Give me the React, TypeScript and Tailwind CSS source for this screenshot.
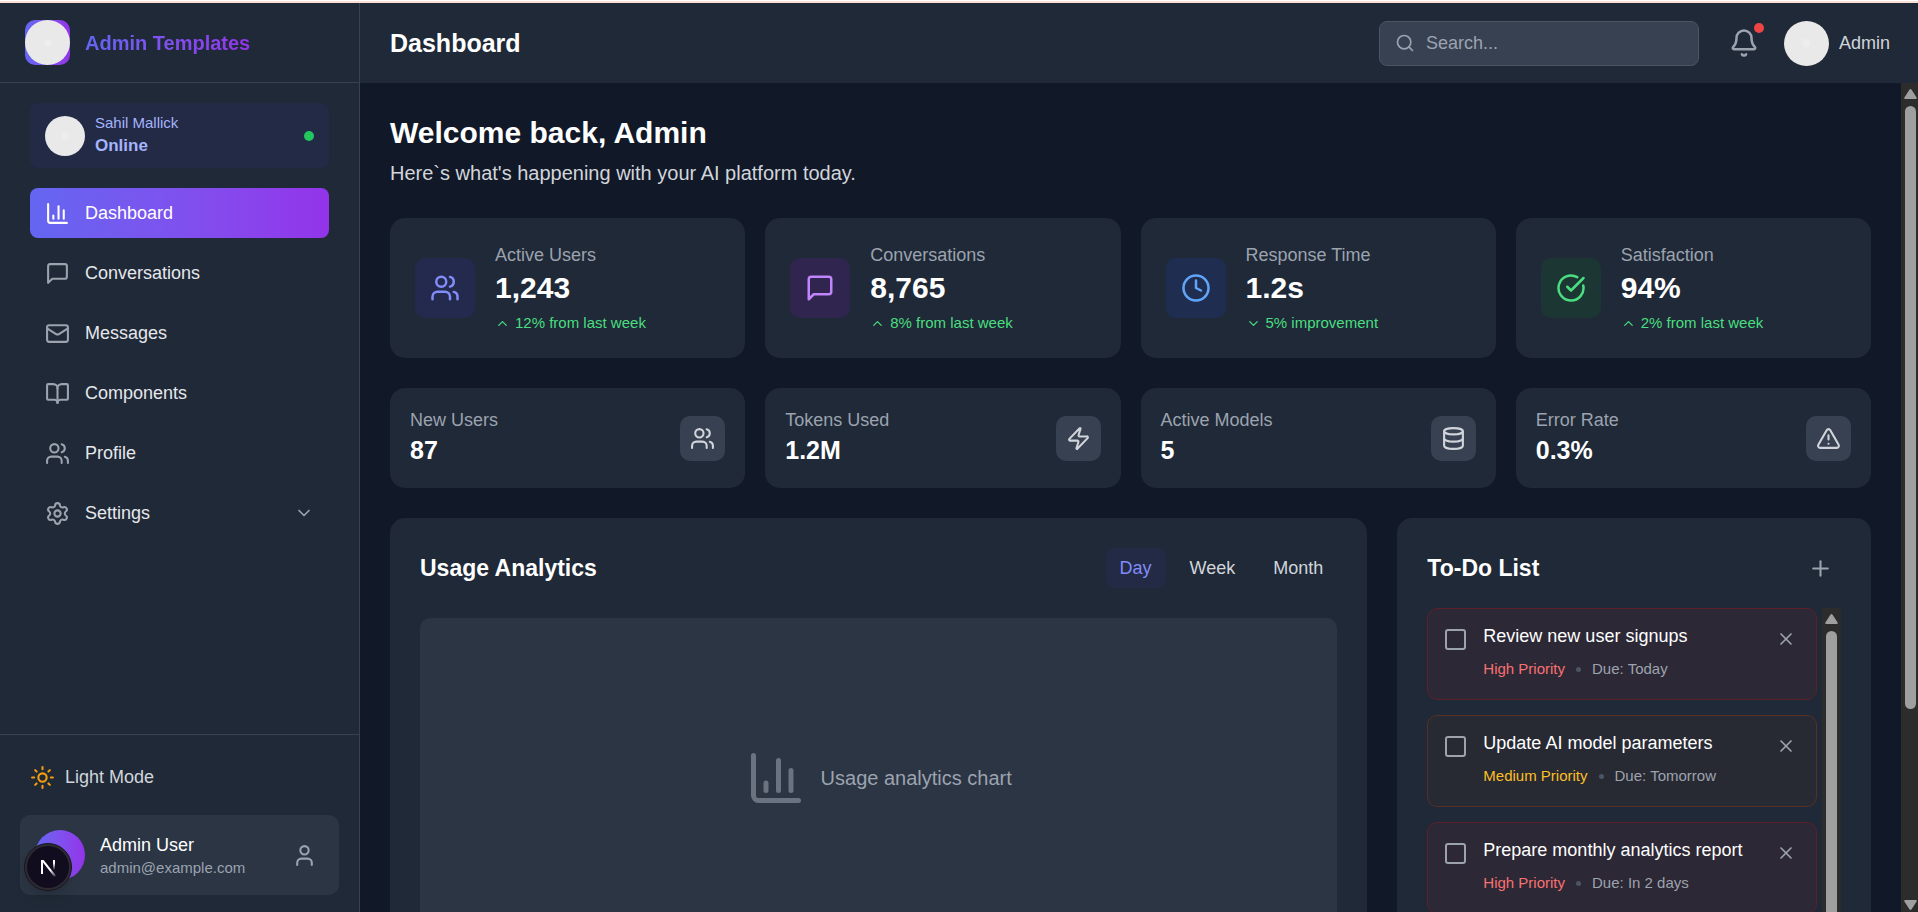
import type { ComponentType, ReactNode } from 'react';
import {
  Bell,
  BookOpen,
  ChartColumn,
  ChevronDown,
  ChevronUp,
  CircleCheckBig,
  Clock,
  Database,
  Mail,
  Plus,
  Search,
  Settings,
  Sun,
  TriangleAlert,
  User,
  Users,
  X,
  Zap,
} from 'lucide-react';

type Icon = ComponentType<{ className?: string }>;

function MessageSquare({ className }: { className?: string }) {
  return (
    <svg
      viewBox="0 0 24 24"
      fill="none"
      stroke="currentColor"
      strokeWidth="2"
      strokeLinecap="round"
      strokeLinejoin="round"
      className={className}
      aria-hidden="true"
    >
      <path d="M21 15a2 2 0 0 1-2 2H7l-4 4V5a2 2 0 0 1 2-2h14a2 2 0 0 1 2 2z" />
    </svg>
  );
}

function Avatar({ className }: { className: string }) {
  return (
    <span className={`flex shrink-0 items-center justify-center rounded-full bg-[#e9e9e9] ${className}`}>
      <span className="size-2 rounded-full bg-[#ededed]" />
    </span>
  );
}

function ScrollBar({ className, thumb, down }: { className: string; thumb: string; down?: boolean }) {
  return (
    <div aria-hidden="true" className={`flex shrink-0 flex-col items-center bg-[#2c2c2c] pt-[6px] ${className}`}>
      <svg viewBox="0 0 13 10" className="h-[10px] w-[13px] shrink-0 fill-[#9f9f9f]">
        <path d="M5.4.8a1.4 1.4 0 0 1 2.2 0l5 7.6a1 1 0 0 1-.9 1.6H1.3a1 1 0 0 1-.9-1.6z" />
      </svg>
      <div className={`mt-[7px] w-[11px] shrink-0 rounded-full bg-[#9f9f9f] ${thumb}`} />
      {down && (
        <svg viewBox="0 0 13 10" className="mt-auto mb-[5px] h-[10px] w-[13px] shrink-0 rotate-180 fill-[#9f9f9f]">
          <path d="M5.4.8a1.4 1.4 0 0 1 2.2 0l5 7.6a1 1 0 0 1-.9 1.6H1.3a1 1 0 0 1-.9-1.6z" />
        </svg>
      )}
    </div>
  );
}

const navItems: { label: string; icon: Icon; active?: boolean; expandable?: boolean }[] = [
  { label: 'Dashboard', icon: ChartColumn, active: true },
  { label: 'Conversations', icon: MessageSquare },
  { label: 'Messages', icon: Mail },
  { label: 'Components', icon: BookOpen },
  { label: 'Profile', icon: Users },
  { label: 'Settings', icon: Settings, expandable: true },
];

function Sidebar() {
  return (
    <aside className="relative flex w-[360px] shrink-0 flex-col border-r border-[#374151] bg-[#1f2937]">
      <div className="flex h-20 shrink-0 items-center gap-[15px] border-b border-[#374151] px-[25px]">
        <span className="rounded-[10px] bg-linear-to-r from-[#6366f1] to-[#9333ea]">
          <Avatar className="size-[45px]" />
        </span>
        <span className="bg-linear-to-r from-[#6366f1] to-[#9333ea] bg-clip-text text-[20px] leading-[30px] font-bold text-transparent">
          Admin Templates
        </span>
      </div>

      <div className="flex flex-1 flex-col gap-5 px-[30px] pt-5">
        <div className="flex items-center gap-[10px] rounded-lg bg-[#232a46] px-[15px] py-[10px] text-[#a5b4fc]">
          <Avatar className="size-10" />
          <div className="flex-1">
            <p className="text-[15px] leading-5">Sahil Mallick</p>
            <p className="text-[17px] leading-[25px] font-bold">Online</p>
          </div>
          <span className="size-[10px] rounded-full bg-[#22c55e]" />
        </div>

        <nav className="flex flex-col gap-[10px]">
          {navItems.map(({ label, icon: ItemIcon, active, expandable }) => (
            <a
              key={label}
              href="#"
              className={`flex h-[50px] items-center gap-[15px] rounded-lg px-[15px] text-[18px] leading-[25px] font-medium ${
                active ? 'bg-linear-to-r from-[#6366f1] to-[#9333ea] text-white' : 'text-[#e5e7eb]'
              }`}
            >
              <ItemIcon className={active ? 'size-[25px]' : 'size-[25px] text-[#9ca3af]'} />
              <span className="flex-1">{label}</span>
              {expandable && <ChevronDown className="size-5 text-[#9ca3af]" />}
            </a>
          ))}
        </nav>
      </div>

      <div className="flex flex-col gap-[15px] border-t border-[#374151] p-5">
        <button type="button" className="flex items-center gap-[10px] p-[10px] text-[18px] leading-[25px] font-medium text-[#d1d5db]">
          <Sun className="size-[25px] text-[#f59e0b]" />
          Light Mode
        </button>
        <div className="flex items-center gap-[15px] rounded-[10px] bg-[#2b3544] p-[15px]">
          <span className="size-[50px] shrink-0 rounded-full bg-linear-to-r from-[#6366f1] to-[#9333ea]" />
          <div className="flex-1">
            <p className="text-[18px] leading-[25px] font-medium text-white">Admin User</p>
            <p className="text-[15px] leading-5 text-[#9ca3af]">admin@example.com</p>
          </div>
          <button type="button" aria-label="Account" className="p-[7px] text-[#9ca3af]">
            <User className="size-[25px]" />
          </button>
        </div>
      </div>

      <button
        type="button"
        aria-label="Developer tools"
        className="absolute bottom-6 left-6 flex size-12 items-center justify-center rounded-full border border-[#17171b] bg-[#2d2a35] p-[2px] shadow-lg"
      >
        <svg viewBox="0 0 42 42" className="size-full">
          <defs>
            <linearGradient id="stem" x1="0" y1="0" x2="0" y2="1">
              <stop offset="0.3" stopColor="#fff" />
              <stop offset="1" stopColor="#fff" stopOpacity="0" />
            </linearGradient>
            <linearGradient id="diagonal" x1="0" y1="0" x2="1" y2="1">
              <stop offset="0.6" stopColor="#fff" />
              <stop offset="1" stopColor="#fff" stopOpacity="0.1" />
            </linearGradient>
          </defs>
          <circle cx="21" cy="21" r="21" fill="#120d1e" />
          <rect x="14" y="14" width="2" height="14" fill="#fff" />
          <path d="M14 14h2.6L29 29.500l-1.800 1.300z" fill="url(#diagonal)" />
          <rect x="26" y="14" width="2" height="10" fill="url(#stem)" />
        </svg>
      </button>
    </aside>
  );
}

function Header() {
  return (
    <header className="flex h-20 shrink-0 items-center justify-between bg-[#1f2937] pr-7 pl-[30px]">
      <h1 className="text-[25px] leading-[35px] font-bold text-white">Dashboard</h1>
      <div className="flex items-center">
        <label className="flex h-[45px] w-80 items-center gap-[11px] rounded-lg border border-[#4b5563] bg-[#374151] px-[15px]">
          <Search className="size-5 shrink-0 text-[#9ca3af]" />
          <input
            type="text"
            aria-label="Search"
            placeholder="Search..."
            className="w-full min-w-0 bg-transparent text-[18px] leading-[25px] text-white outline-none placeholder:text-[#9ca3af]"
          />
        </label>
        <button type="button" aria-label="Notifications" className="relative ml-5 p-[10px] text-[#9ca3af]">
          <Bell className="size-[30px]" />
          <span className="absolute top-[5px] right-[5px] size-[10px] rounded-full bg-[#ef4444]" />
        </button>
        <button type="button" className="ml-[15px] flex items-center gap-[10px] text-[18px] leading-[25px] font-medium text-[#d1d5db]">
          <Avatar className="size-[45px]" />
          Admin
        </button>
      </div>
    </header>
  );
}

const stats: { label: string; value: string; trend: string; icon: Icon; arrow: Icon; tone: string }[] = [
  { label: 'Active Users', value: '1,243', trend: '12% from last week', icon: Users, arrow: ChevronUp, tone: 'bg-[#242a4d] text-[#818cf8]' },
  { label: 'Conversations', value: '8,765', trend: '8% from last week', icon: MessageSquare, arrow: ChevronUp, tone: 'bg-[#30254f] text-[#c084fc]' },
  { label: 'Response Time', value: '1.2s', trend: '5% improvement', icon: Clock, arrow: ChevronDown, tone: 'bg-[#1f2e50] text-[#60a5fa]' },
  { label: 'Satisfaction', value: '94%', trend: '2% from last week', icon: CircleCheckBig, arrow: ChevronUp, tone: 'bg-[#1c3634] text-[#4ade80]' },
];

const metrics: { label: string; value: string; icon: Icon }[] = [
  { label: 'New Users', value: '87', icon: Users },
  { label: 'Tokens Used', value: '1.2M', icon: Zap },
  { label: 'Active Models', value: '5', icon: Database },
  { label: 'Error Rate', value: '0.3%', icon: TriangleAlert },
];

const todos: { title: string; priority: 'High' | 'Medium'; due: string }[] = [
  { title: 'Review new user signups', priority: 'High', due: 'Today' },
  { title: 'Update AI model parameters', priority: 'Medium', due: 'Tomorrow' },
  { title: 'Prepare monthly analytics report', priority: 'High', due: 'In 2 days' },
];

function Panel({ title, actions, children, className }: { title: string; actions: ReactNode; children: ReactNode; className: string }) {
  return (
    <section className={`flex flex-col rounded-[15px] bg-[#1f2937] p-[30px] ${className}`}>
      <div className="flex h-10 items-center justify-between">
        <h3 className="text-[23px] leading-[35px] font-bold text-white">{title}</h3>
        {actions}
      </div>
      {children}
    </section>
  );
}

function Content() {
  return (
    <main className="flex-1 overflow-hidden p-[30px]">
      <h2 className="text-[30px] leading-10 font-bold text-white">Welcome back, Admin</h2>
      <p className="mt-[5px] text-[20px] leading-[30px] text-[#d1d5db]">
        Here`s what's happening with your AI platform today.
      </p>

      <div className="mt-[30px] grid grid-cols-4 gap-5">
        {stats.map(({ label, value, trend, icon: StatIcon, arrow: Arrow, tone }) => (
          <div key={label} className="flex items-center gap-5 rounded-[15px] bg-[#1f2937] p-[25px]">
            <span className={`flex size-[60px] shrink-0 items-center justify-center rounded-[10px] ${tone}`}>
              <StatIcon className="size-[30px]" />
            </span>
            <div>
              <p className="text-[18px] leading-[25px] text-[#9ca3af]">{label}</p>
              <p className="text-[30px] leading-10 font-bold text-white">{value}</p>
              <p className="mt-[5px] flex items-center gap-[5px] text-[15px] leading-5 text-[#4ade80]">
                <Arrow className="size-[15px]" />
                {trend}
              </p>
            </div>
          </div>
        ))}
      </div>

      <div className="mt-[30px] grid grid-cols-4 gap-5">
        {metrics.map(({ label, value, icon: MetricIcon }) => (
          <div key={label} className="flex items-center justify-between rounded-[15px] bg-[#1f2937] p-5">
            <div>
              <p className="text-[18px] leading-[25px] text-[#9ca3af]">{label}</p>
              <p className="text-[25px] leading-[35px] font-bold text-white">{value}</p>
            </div>
            <span className="flex size-[45px] items-center justify-center rounded-[10px] bg-[#374151] text-[#d1d5db]">
              <MetricIcon className="size-[25px]" />
            </span>
          </div>
        ))}
      </div>

      <div className="mt-[30px] grid grid-cols-3 gap-[30px]">
        <Panel
          title="Usage Analytics"
          className="col-span-2"
          actions={
            <div className="flex gap-[10px] text-[18px] leading-[25px] font-medium text-[#d1d5db]">
              <button type="button" className="h-10 rounded-lg bg-[#232a46] px-[14px] text-[#818cf8]">Day</button>
              <button type="button" className="h-10 rounded-lg px-[14px]">Week</button>
              <button type="button" className="h-10 rounded-lg px-[14px]">Month</button>
            </div>
          }
        >
          <div className="mt-[30px] flex h-80 items-center justify-center gap-[15px] rounded-[10px] bg-[#2b3544]">
            <ChartColumn className="size-[60px] text-[#6b7280]" />
            <p className="text-[20px] leading-[30px] text-[#9ca3af]">Usage analytics chart</p>
          </div>
        </Panel>

        <Panel
          title="To-Do List"
          className=""
          actions={
            <button type="button" aria-label="Add task" className="p-2 text-[#9ca3af]">
              <Plus className="size-[25px]" />
            </button>
          }
        >
          <div className="mt-5 flex h-[400px] gap-[5px] overflow-hidden">
            <ul className="flex flex-1 flex-col gap-[15px]">
              {todos.map(({ title, priority, due }, i) => (
                <li
                  key={title}
                  className={`flex items-start gap-[15px] rounded-[10px] border px-[15px] pt-[15px] pb-5 ${
                    priority === 'High' ? 'border-[#5c2029] bg-[#2c2835]' : 'border-[#553024] bg-[#282a33]'
                  }`}
                >
                  <input
                    id={`todo-${i}`}
                    type="checkbox"
                    className="mx-[2px] mt-[5px] size-[21px] shrink-0 appearance-none rounded-[3px] border-2 border-[#9ca3af]"
                  />
                  <div className="flex-1">
                    <label htmlFor={`todo-${i}`} className="block text-[18px] leading-[25px] font-medium text-white">
                      {title}
                    </label>
                    <p className="mt-[10px] flex items-center gap-[11px] text-[15px] leading-5 text-[#9ca3af]">
                      <span className={priority === 'High' ? 'text-[#f87171]' : 'text-[#fbbf24]'}>{priority} Priority</span>
                      <span className="size-[5px] rounded-full bg-[#4b5563]" />
                      <span>Due: {due}</span>
                    </p>
                  </div>
                  <button type="button" aria-label={`Remove ${title}`} className="p-[5px] text-[#9ca3af]">
                    <X className="size-5" />
                  </button>
                </li>
              ))}
            </ul>
            <ScrollBar className="w-[19px]" thumb="h-[340px]" />
          </div>
        </Panel>
      </div>
    </main>
  );
}

export default function App() {
  return (
    <div className="flex h-screen flex-col overflow-hidden bg-[#111827] font-['Liberation_Sans',Arial,sans-serif]">
      <div className="h-[3px] shrink-0 border-t border-white bg-[#fbdfd3]" />
      <div className="flex h-screen shrink-0">
        <Sidebar />
        <div className="flex min-w-0 flex-1 flex-col">
          <Header />
          <div className="flex min-h-0 flex-1">
            <Content />
            <ScrollBar className="w-[17px] pl-[2px]" thumb="h-[603px]" down />
          </div>
        </div>
      </div>
    </div>
  );
}
